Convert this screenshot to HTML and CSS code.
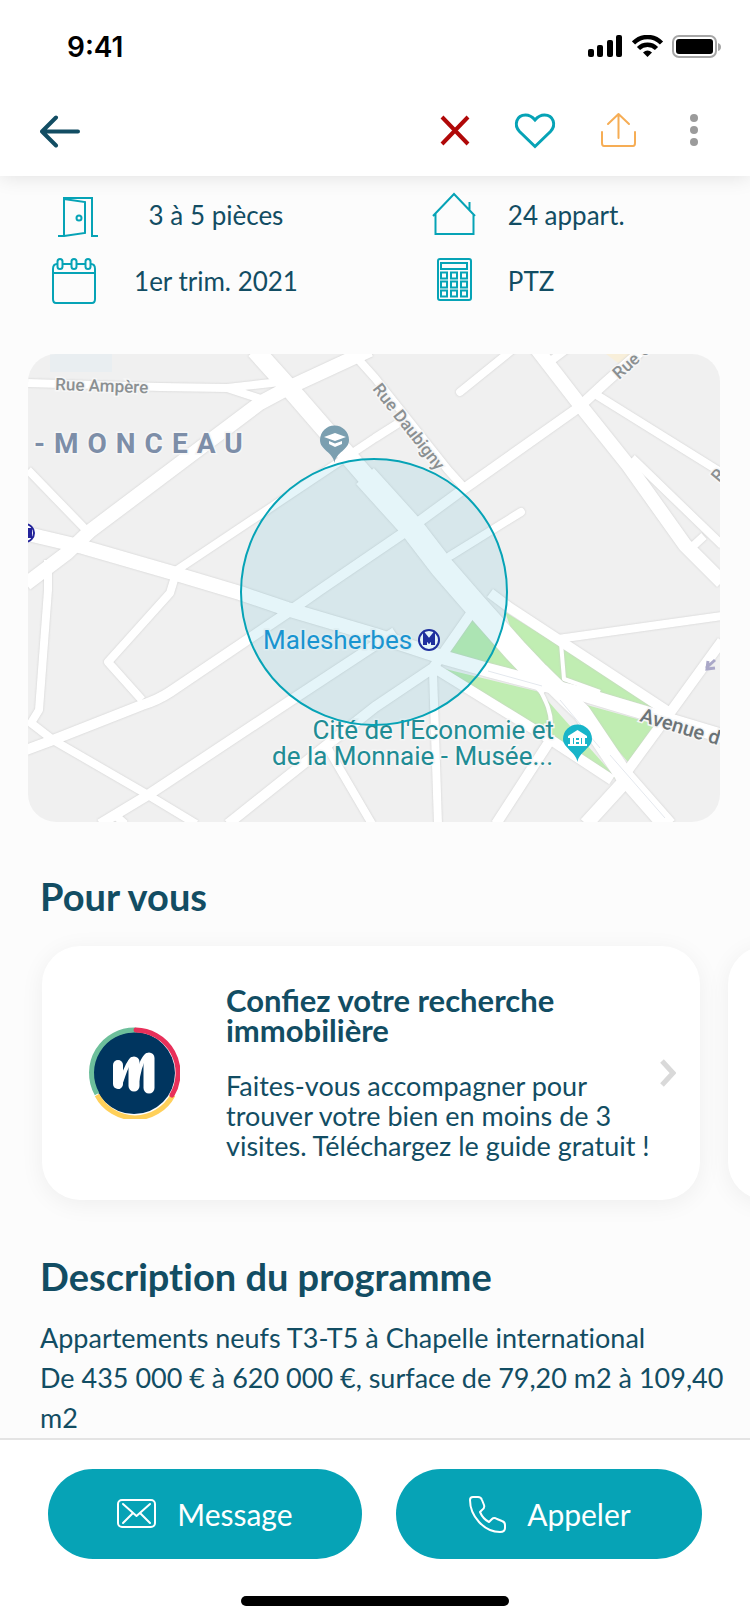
FILE: index.html
```html
<!DOCTYPE html>
<html lang="fr">
<head>
  <meta charset="UTF-8">
  <meta name="viewport" content="width=device-width, initial-scale=1.0">
  <title>Programme neuf - Chapelle international</title>
  <link rel="stylesheet" href="styles.css">
</head>
<body>
  <header class="header">
    <div class="status-bar">
      <span class="time">9:41</span>
      <div class="status-icons">
        <svg width="36" height="24" viewBox="0 0 36 24">
          <rect x="0" y="14" width="6" height="8" rx="2"/>
          <rect x="9" y="10" width="6" height="12" rx="2"/>
          <rect x="19" y="5" width="6" height="17" rx="2"/>
          <rect x="28" y="0" width="6" height="22" rx="2"/>
        </svg>
        <svg width="32" height="24" viewBox="0 0 32 24" fill="none" stroke="#000" stroke-width="4.5">
          <path d="M1.500 8 C9.500 0 21.500 0 29.500 8"/>
          <path d="M6.500 13.500 C11.500 8.500 19.500 8.500 24.500 13.500"/>
          <path d="M15.500 22 L11 17.500 Q15.500 13.500 20 17.500 Z" fill="#000" stroke="none"/>
        </svg>
        <svg width="50" height="24" viewBox="0 0 50 24">
          <rect x="1" y="1" width="43" height="21" rx="6" fill="none" stroke="#a6a6a6" stroke-width="2"/>
          <rect x="4" y="4" width="37" height="15" rx="3"/>
          <path d="M46 8 Q49 9 49 12 Q49 15 46 16 Z" fill="#a6a6a6"/>
        </svg>
      </div>
    </div>
    <nav class="nav">
      <button class="icon-button back" type="button" aria-label="Retour">
        <svg width="40" height="40" viewBox="0 0 40 40" fill="none" stroke="#124d63" stroke-width="4" stroke-linecap="round" stroke-linejoin="round">
          <path d="M38 20.500 H2 M16 6.500 L2 20.500 L16 34.500"/>
        </svg>
      </button>
      <button class="icon-button" type="button" aria-label="Masquer">
        <svg width="40" height="40" viewBox="0 0 40 40" fill="none" stroke="#b00808" stroke-width="4">
          <path d="M7 6 L33 33 M33 6 L7 33"/>
        </svg>
      </button>
      <button class="icon-button" type="button" aria-label="Ajouter aux favoris">
        <svg width="44" height="40" viewBox="0 0 44 40" fill="none" stroke="#06a3b6" stroke-width="3">
          <path d="M22 35.500 L6.500 20.500 C0.500 14 3.500 4 12.500 4 C17 4 19.500 6 22 9 C24.500 6 27 4 31.500 4 C40.500 4 43.500 14 37.500 20.500 Z"/>
        </svg>
      </button>
      <button class="icon-button" type="button" aria-label="Partager">
        <svg width="44" height="40" viewBox="0 0 44 40" fill="none" stroke="#f6ad55" stroke-width="2" stroke-linecap="round" stroke-linejoin="round">
          <path d="M7 21 V32 Q7 35 9 35 H38 Q40 35 40 32 V21"/>
          <path d="M23.500 27 V3 M13 13 L23.500 3 L34 13"/>
        </svg>
      </button>
      <button class="icon-button" type="button" aria-label="Plus d'options">
        <svg width="34" height="40" viewBox="0 0 34 40" fill="#9b9b9b">
          <circle cx="17" cy="7" r="4"/>
          <circle cx="17" cy="19" r="4"/>
          <circle cx="17" cy="31" r="4"/>
        </svg>
      </button>
    </nav>
  </header>

  <main class="content">
    <ul class="features">
      <li class="feature">
        <svg class="line-icon" width="46" height="46" viewBox="0 0 46 46">
          <path d="M6 44 H12 V6 H40 V44 H46 M12 7 L33 10 V41 L12 44"/>
          <circle cx="27" cy="26" r="2.500"/>
        </svg>
        <span class="feature-text">3 à 5 pièces</span>
      </li>
      <li class="feature wide">
        <svg class="line-icon" width="46" height="46" viewBox="0 0 46 46">
          <path d="M1 24 L22 2 L43 24 M3.500 22 V42 H41.500 V22 M37.500 18 V10"/>
        </svg>
        <span class="feature-text">24 appart.</span>
      </li>
      <li class="feature">
        <svg class="line-icon" width="46" height="48" viewBox="0 0 46 48">
          <path d="M5 7 Q1 7 1 12 V42 Q1 46 4 46 H40 Q43 46 43 42 V12 Q43 7 39 7 M11 7 H19 M25 7 H33 M1 16 H43"/>
          <rect x="5.500" y="2" width="5" height="10" rx="2.500"/>
          <rect x="19.500" y="2" width="5" height="10" rx="2.500"/>
          <rect x="33.500" y="2" width="5" height="10" rx="2.500"/>
        </svg>
        <span class="feature-text">1er trim. 2021</span>
      </li>
      <li class="feature wide">
        <svg class="line-icon" width="46" height="48" viewBox="0 0 46 48">
          <rect x="6" y="2" width="33" height="41" rx="2"/>
          <rect x="9" y="6" width="26" height="6"/>
          <path d="M9 15.500 h6 v6 h-6 z M19 15.500 h6 v6 h-6 z M29 15.500 h6 v6 h-6 z M9 24.500 h6 v6 h-6 z M19 24.500 h6 v6 h-6 z M29 24.500 h6 v6 h-6 z M9 33.500 h6 v6 h-6 z M19 33.500 h6 v6 h-6 z M29 33.500 h6 v6 h-6 z"/>
        </svg>
        <span class="feature-text">PTZ</span>
      </li>
    </ul>

    <svg class="map" viewBox="28 354 692 468" role="img" aria-label="Plan du quartier Malesherbes">
      <!-- parks and buildings -->
      <g fill="#c0edb2">
        <path d="M473 616 L447 654 L532 674 Z"/>
        <path d="M437 667 L540 692 L618 780 L548 742 Z"/>
        <path d="M505 612 L662 710 L562 682 L515 640 Z"/>
        <path d="M576 702 L655 724 L628 762 Z"/>
      </g>
      <path d="M50 354 h62 v18 h-62 z" fill="#e9eef1"/>
      <path d="M606 354 h26 l-14 9 z" fill="#f8efda"/>

      <!-- roads -->
      <g class="roads">
        <path class="w4" d="M540 690 C545 700 551 710 551 725 M561 643 L564 679 L600 692"/>
        <path class="w8" d="M460 392 L512 350 M450 556 L521 512" stroke-linecap="round"/>
        <path class="w8" d="M28 383 L160 387 L227 388 L280 382 M227 388 L264 400 M552 360 L568 348"/>
        <path class="w8" d="M350 350 L375 378 L448 470 L466 490"/>
        <path class="w8" d="M28 470 L90 534 M48 560 V590 L39 710 L31 723 L53 740 L148 795 L196 824"/>
        <path class="w8" d="M405 419 L375 438 L177 570 L170 593 L108 662 L142 700"/>
        <path class="w8" d="M433 672 L438 824 M327 747 L372 824 M115 815 L125 824"/>
        <path class="w8" d="M632 458 L722 545 M704 536 L691 548 M595 394 L722 473 M558 639 L722 616"/>
        <path class="w10" d="M26 750 L53 740 L142 705 Q158 700 170 692 L287 613 L320 590 L405 532 L465 488 L578 408 L605 383 L640 352"/>
        <path class="w10" d="M100 824 L148 795 L287 703 L395 632 M228 824 L327 745 L375 707 L433 668 L472 612"/>
        <path class="w10" d="M436 669 L548 738 L612 780 M549 742 L496 824"/>
        <path class="w10" d="M490 593 L510 608 L670 713 M628 770 L672 710 L722 641"/>
        <path class="w14" d="M28 534 L83 547 L173 573 L240 593 L287 609 L375 635 L442 657 L488 670 L542 684 L582 694 L722 736"/>
        <path class="w14" d="M370 350 L290 387 L260 403 L90 531 L67 553 L26 584 M628 778 L586 824"/>
        <path class="w14" d="M536 348 L580 405 L628 465 L685 545 L722 582"/>
        <path class="w18" d="M255 350 L290 389 L375 487 M540 672 L582 713 L625 777 L668 826"/>
        <path class="w24" d="M365 476 L412 528 L442 567 L475 605 L515 650 L550 687"/>
      </g>
      <path d="M488 671 L542 686 M560 700 L600 748 M610 755 L665 818" fill="none" stroke="#e4e8ee"/>

      <!-- labels -->
      <g class="map-labels">
        <text class="street" x="55" y="390" transform="rotate(2 55 390)">Rue Ampère</text>
        <text class="street" x="372" y="389" transform="rotate(52 372 389)">Rue Daubigny</text>
        <text class="street" x="619" y="380" transform="rotate(-42 619 380)">Rue C</text>
        <text class="street" x="719" y="483" transform="rotate(-50 719 483)">R</text>
        <text class="avenue" x="639" y="721" transform="rotate(17 639 721)">Avenue d</text>
        <text class="district" x="34" y="453">-MONCEAU</text>
        <text class="station" x="263" y="649">Malesherbes</text>
        <text class="museum" x="554" y="739" text-anchor="end">Cité de l'Economie et</text>
        <text class="museum" x="553" y="765" text-anchor="end">de la Monnaie - Musée...</text>
      </g>

      <!-- metro stations -->
      <g fill="#fff" stroke="#23239a" stroke-width="2">
        <circle cx="429" cy="640" r="10"/>
        <circle cx="25" cy="533" r="9"/>
        <path d="M425 645 V636 L429 641 L433 636 V645 M30 528 V538" fill="none" stroke-width="4"/>
      </g>
      <path d="M706 668 l9 -8 M708 661 l-1 8 l8 -1" fill="none" stroke="#aaa8c8" stroke-width="3"/>

      <!-- school pin -->
      <path d="M334.500 463 C333 452 320 450 320 440 A14.500 14.500 0 0 1 349 440 C349 450 336 452 334.500 463 Z" fill="#7b9fb0"/>
      <path d="M324 437 L335 433 L346 437 L335 441 Z M329 441 L335 443.500 L342 441 V444 L335 447 L329 444 Z" fill="#fff"/>
      <!-- museum pin -->
      <path d="M577.500 762 C576 752 563 748 563 739 A14.500 14.500 0 0 1 592 739 C592 748 579 752 577.500 762 Z" fill="#18b5c9"/>
      <path d="M568 736 L577.500 730 L587 736 V738 H568 Z M570 738 h3 v6 h-3 z M582 738 h3 v6 h-3 z M568 744 H587 V746 H568 Z M574 738 h2 v2 h3 v-2 h2 v6 h-2 v-2 h-3 v2 h-2 z" fill="#fff"/>

      <circle class="map-area" cx="374" cy="592" r="133"/>
    </svg>

    <section>
      <h2 class="section-title">Pour vous</h2>
      <div class="cards">
        <a class="card" href="#guide">
          <svg class="card-logo" width="92" height="92" viewBox="0 0 92 92" fill="none">
            <circle cx="46" cy="46" r="41" fill="#00355f"/>
            <g stroke-width="5">
              <path d="M85 68 A43 43 0 0 1 9 68" stroke="#ffd05a"/>
              <path d="M9 67 A43 43 0 0 1 48 3" stroke="#6dbf9b"/>
              <path d="M48 3 A43 43 0 0 1 84 68" stroke="#e8305a" stroke-linecap="round"/>
            </g>
            <g stroke="#fff" stroke-linecap="round">
              <path d="M30 38 V57" stroke-width="10"/>
              <path d="M46 35 V59" stroke-width="11"/>
              <path d="M61 31 V61" stroke-width="11"/>
              <path d="M31 60 C35 53 37 38 44 32 M47 61 C51 51 51 34 59 28" stroke-width="4"/>
            </g>
          </svg>
          <div class="card-body">
            <h3 class="card-title">Confiez votre recherche immobilière</h3>
            <p class="card-text">Faites-vous accompagner pour trouver votre bien en moins de 3 visites. Téléchargez le guide gratuit !</p>
          </div>
          <svg width="16" height="28" viewBox="0 0 16 28" fill="none" stroke="#d9d9d9" stroke-width="5">
            <path d="M2 2 L13 14 L2 26"/>
          </svg>
        </a>
        <div class="card"></div>
      </div>
    </section>

    <section>
      <h2 class="section-title">Description du programme</h2>
      <p class="description">Appartements neufs T3-T5 à Chapelle international<br>De 435 000 € à 620 000 €, surface de 79,20 m2 à 109,40 m2</p>
    </section>
  </main>

  <footer class="footer">
    <div class="actions">
      <button class="action message" type="button">
        <svg width="40" height="40" viewBox="0 0 40 40">
          <rect x="1" y="6" width="37" height="27" rx="4"/>
          <path d="M6 10 L19.500 22 L33 10 M6 29 L16 19 M33 29 L23 19"/>
        </svg>
        Message
      </button>
      <button class="action call" type="button">
        <svg width="40" height="40" viewBox="0 0 40 40">
          <path d="M3 6 Q3 3 6 3 H11 Q14 3 15 6 L17 11 Q18 14 15 16 L13 18 Q16 25 22 28 L25 25 Q27 23 30 25 L35 27 Q38 28 38 31 V34 Q38 38 33 38 C17 38 3 22 3 6 Z"/>
        </svg>
        Appeler
      </button>
    </div>
    <div class="home-indicator"></div>
  </footer>
</body>
</html>
```

FILE: styles.css
```css
* {
  box-sizing: border-box;
}
body {
  font-family: Lato, "Noto Sans", sans-serif;
  font-size: 26px;
  margin: 0;
  height: 100vh;
  display: flex;
  flex-direction: column;
  overflow: hidden;
  background-color: #fcfcfc;
  color: #124d63;
}
h2, h3, p, ul {
  margin: 0;
  padding: 0;
}
button {
  font-family: inherit;
  border: none;
  cursor: pointer;
}
svg {
  flex: none;
  display: block;
}

/* Header */
.header {
  position: relative;
  z-index: 1;
  background-color: #fff;
  padding: 30px 28px 25px 40px;
  box-shadow: 0 0 20px rgba(0, 0, 0, 0.12);
}
.status-bar {
  display: flex;
  justify-content: space-between;
  align-items: center;
  height: 34px;
  padding-left: 27px;
  color: #000;
}
.time {
  font-family: Inter, sans-serif;
  font-size: 28px;
  font-weight: 600;
}
.status-icons {
  display: flex;
  gap: 8px;
}
.nav {
  display: flex;
  gap: 38px;
  padding-right: 11px;
  margin-top: 47px;
}
.icon-button {
  background: none;
  padding: 0;
}
.back {
  margin-right: auto;
}

/* Content */
.content {
  flex: 1;
  min-height: 0;
  overflow-y: auto;
  scrollbar-width: none;
  padding-top: 6px;
}
.features {
  list-style: none;
  display: grid;
  grid-template-columns: 3fr 2fr;
  grid-auto-rows: 66px;
  padding: 0 65px 0 52px;
}
.feature {
  display: flex;
  align-items: center;
}
.feature-text {
  width: 236px;
  text-align: center;
}
.feature.wide .feature-text {
  width: auto;
  margin-left: 30px;
}
.line-icon {
  fill: none;
  stroke: #06a3b6;
  stroke-width: 2;
}

/* Map */
.map {
  width: calc(100% - 58px);
  margin: 40px 30px 0 28px;
  border-radius: 28px;
  background-color: #f0f0f0;
}
.roads {
  fill: none;
  stroke: #fff;
  stroke-linejoin: round;
  filter: drop-shadow(0 0 1px #ccc);
}
.w4 { stroke-width: 4; }
.w8 { stroke-width: 8; }
.w10 { stroke-width: 10; }
.w14 { stroke-width: 14; }
.w18 { stroke-width: 18; }
.w24 { stroke-width: 24; }
.map-labels {
  font-family: Roboto, sans-serif;
  stroke: #f6f6f6;
  stroke-width: 3;
  paint-order: stroke;
}
.street {
  font-size: 17px;
  font-weight: 500;
  fill: #8b9092;
}
.avenue {
  font-size: 20px;
  font-weight: 500;
  fill: #6b7377;
}
.district {
  font-size: 28px;
  font-weight: 700;
  letter-spacing: 9px;
  fill: #7d8ea8;
}
.station {
  font-size: 26px;
  fill: #1c93d2;
}
.museum {
  font-size: 26px;
  fill: #218c94;
}
.map-area {
  fill: rgba(0, 160, 200, 0.1);
  stroke: #06a3b6;
  stroke-width: 2;
}

/* Sections */
.section-title {
  font-size: 38px;
  line-height: 48px;
  font-weight: 700;
  font-variant-ligatures: none;
  padding: 0 40px;
  margin-top: 50px;
}
.cards {
  display: flex;
  gap: 28px;
  overflow-x: auto;
  scrollbar-width: none;
  padding: 26px 42px 40px;
  margin-bottom: -38px;
}
.card {
  flex: 0 0 calc(100% - 8px);
  min-height: 254px;
  display: flex;
  align-items: center;
  padding: 0 24px 0 46px;
  background-color: #fff;
  border-radius: 38px;
  box-shadow: 0 4px 24px rgba(0, 0, 0, 0.06);
  color: inherit;
  text-decoration: none;
}
.card-logo {
  margin-right: 46px;
}
.card-body {
  flex: 1;
}
.card-title {
  font-size: 31px;
  line-height: 30px;
  font-weight: 700;
  margin-bottom: 26px;
}
.card-text {
  font-size: 27px;
  line-height: 30px;
}
.description {
  font-size: 27px;
  line-height: 40px;
  font-variant-ligatures: none;
  padding: 0 20px 0 40px;
  margin-top: 18px;
}

/* Footer */
.footer {
  background-color: #fff;
  border-top: 2px solid #e4e4e4;
  padding: 29px 48px 18px;
}
.actions {
  display: flex;
  gap: 34px;
}
.action {
  height: 90px;
  display: flex;
  justify-content: center;
  align-items: center;
  gap: 20px;
  border-radius: 45px;
  background-color: #06a3b6;
  color: #fff;
  font-size: 30px;
}
.message {
  flex: 314;
}
.call {
  flex: 306;
}
.action svg {
  fill: none;
  stroke: #fff;
  stroke-width: 2;
  stroke-linecap: round;
  stroke-linejoin: round;
}
.home-indicator {
  width: 268px;
  height: 10px;
  margin: 37px auto 0;
  border-radius: 5px;
  background-color: #000;
}
```
